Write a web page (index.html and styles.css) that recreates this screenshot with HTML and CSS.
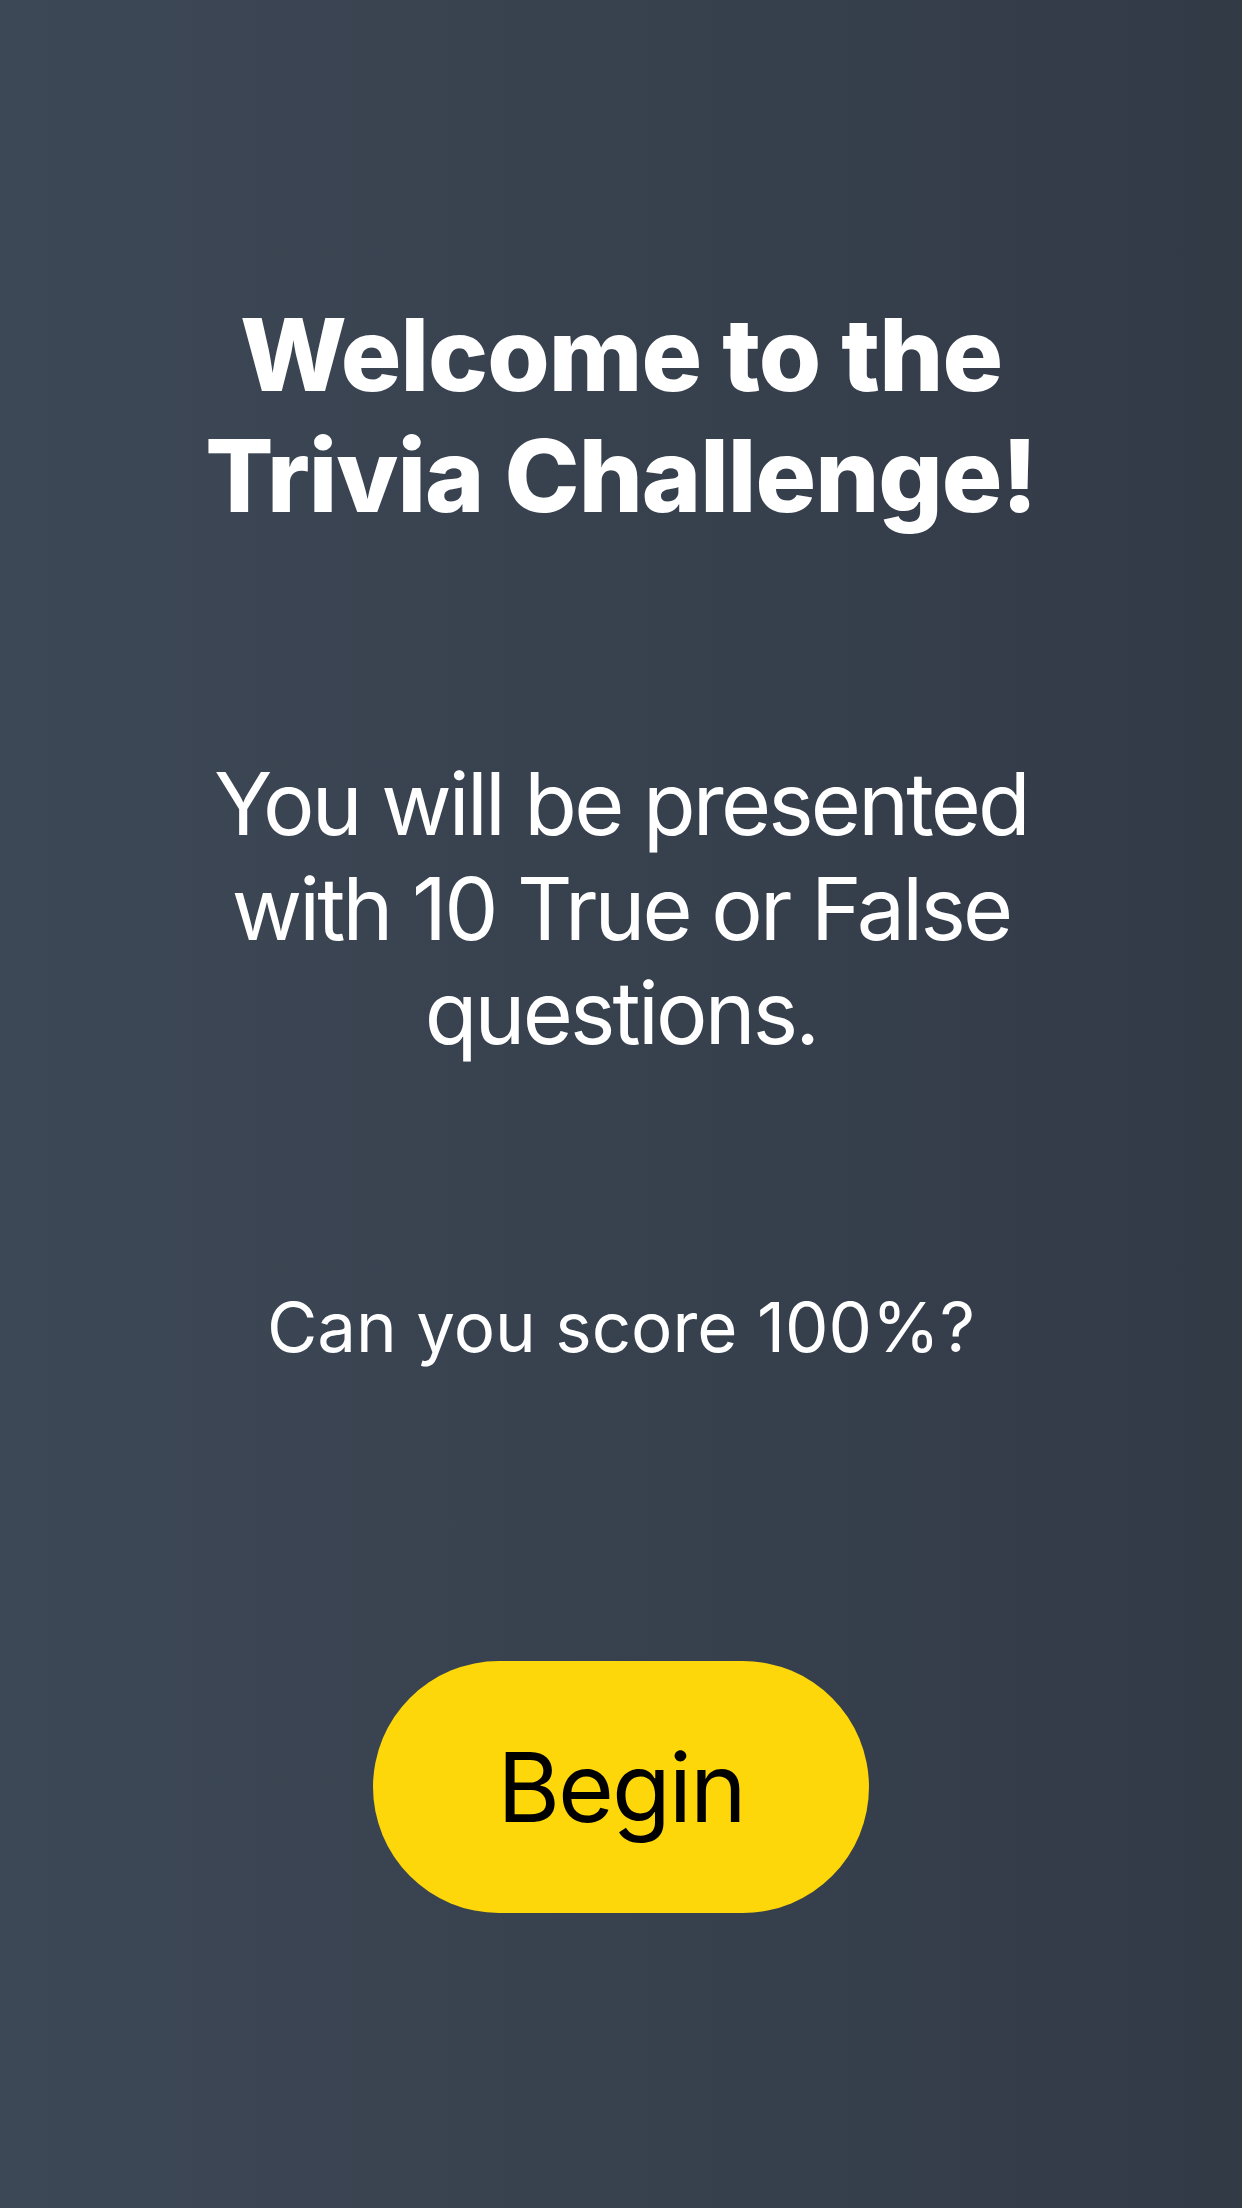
FILE: index.html
```html
<!DOCTYPE html>
<html lang="en">
<head>
<meta charset="utf-8">
<title>Trivia Challenge</title>
<link rel="stylesheet" href="styles.css">
</head>
<body>
<main class="screen">
  <h1 class="title">Welcome to the Trivia Challenge!</h1>
  <p class="intro">You will be presented with 10 True or False questions.</p>
  <p class="question">Can you score 100%?</p>
  <button class="begin" type="button">Begin</button>
</main>
</body>
</html>
```
FILE: styles.css
```css
* { box-sizing: border-box; }
html, body {
  margin: 0;
  padding: 0;
}
body {
  width: 1242px;
  height: 2208px;
  background: linear-gradient(to right, #3d4856, #323a46);
  font-family: Inter, "Noto Sans", sans-serif;
  color: #ffffff;
  overflow: hidden;
}
.screen {
  display: flex;
  flex-direction: column;
  align-items: center;
  padding: 294px 190px 0;
  text-align: center;
}
.title {
  margin: 0;
  font-size: 101px;
  line-height: 121px;
  font-weight: 800;
  letter-spacing: -1px;
}
.intro {
  margin: 216px 0 0;
  font-size: 86px;
  line-height: 104.5px;
  font-weight: 400;
  letter-spacing: -2.8px;
}
.question {
  margin: 220px 0 0;
  font-size: 69px;
  line-height: 83px;
  font-weight: 400;
}
.begin {
  margin-top: 292px;
  width: 496px;
  height: 252px;
  border: none;
  border-radius: 126px;
  background: #fdd709;
  color: #000000;
  font-family: Inter, "Noto Sans", sans-serif;
  font-size: 96px;
  font-weight: 400;
  letter-spacing: -2px;
  padding: 0;
}
```
